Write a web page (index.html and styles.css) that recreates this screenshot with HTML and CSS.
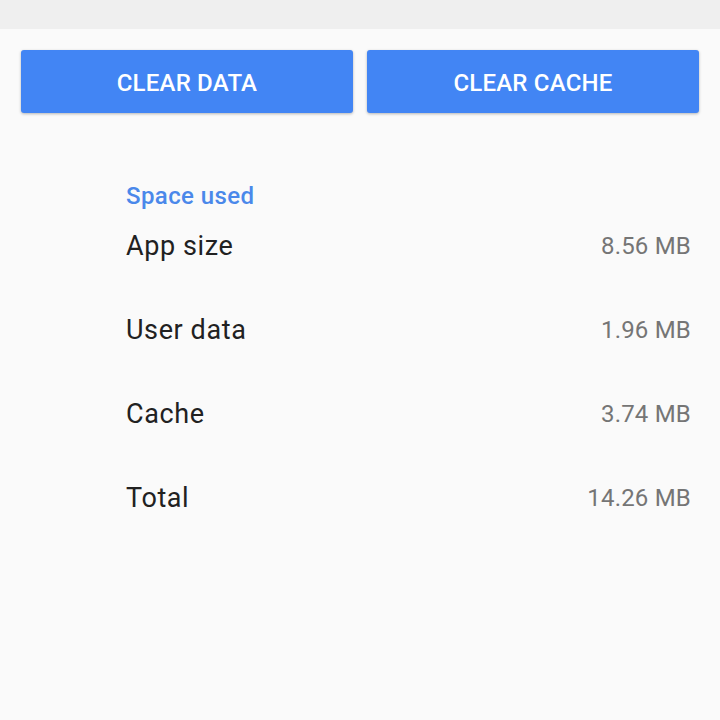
FILE: index.html
```html
<!DOCTYPE html>
<html lang="en">

<head>
    <meta charset="UTF-8">
    <meta name="viewport" content="width=device-width, initial-scale=1.0">
    <title>Storage</title>
    <link rel="stylesheet" href="styles.css">
</head>

<body>
    <div class="status-bar"></div>

    <div class="actions">
        <button class="action-btn">CLEAR DATA</button>
        <button class="action-btn">CLEAR CACHE</button>
    </div>

    <div class="space">
        <h2 class="space-title">Space used</h2>
        <ul class="space-list">
            <li class="space-row"><span class="label">App size</span><span class="value">8.56 MB</span></li>
            <li class="space-row"><span class="label">User data</span><span class="value">1.96 MB</span></li>
            <li class="space-row"><span class="label">Cache</span><span class="value">3.74 MB</span></li>
            <li class="space-row"><span class="label">Total</span><span class="value">14.26 MB</span></li>
        </ul>
    </div>
</body>

</html>
```

FILE: styles.css
```css
* {
    margin: 0;
    padding: 0;
    box-sizing: border-box;
}

body {
    font-family: Roboto, "Noto Sans", sans-serif;
    background-color: #fafafa;
    width: 720px;
    height: 720px;
    overflow: hidden;
}

.status-bar {
    height: 29px;
    background-color: #efefef;
}

.actions {
    display: flex;
    gap: 14px;
    padding: 21px 21px 0 21px;
}

.action-btn {
    flex: 1;
    height: 63px;
    border: none;
    border-radius: 3px;
    background-color: #4285f4;
    color: #ffffff;
    font-family: Roboto, sans-serif;
    font-weight: 500;
    font-size: 24px;
    letter-spacing: 0.2px;
    padding-top: 2px;
    box-shadow: 0 1px 3px rgba(0, 0, 0, 0.28);
}

.space {
    padding: 0 29px 0 126px;
    margin-top: 75px;
}

.space-title {
    height: 16px;
    line-height: 16px;
    font-size: 24px;
    font-weight: 500;
    letter-spacing: 0.4px;
    color: #4a88ea;
}

.space-list {
    list-style-type: none;
}

.space-row {
    display: flex;
    justify-content: space-between;
    height: 84px;
    line-height: 84px;
}

.label {
    font-size: 27px;
    letter-spacing: 0.6px;
    color: #212121;
}

.value {
    font-size: 24px;
    letter-spacing: 0.2px;
    color: #757575;
}
```
